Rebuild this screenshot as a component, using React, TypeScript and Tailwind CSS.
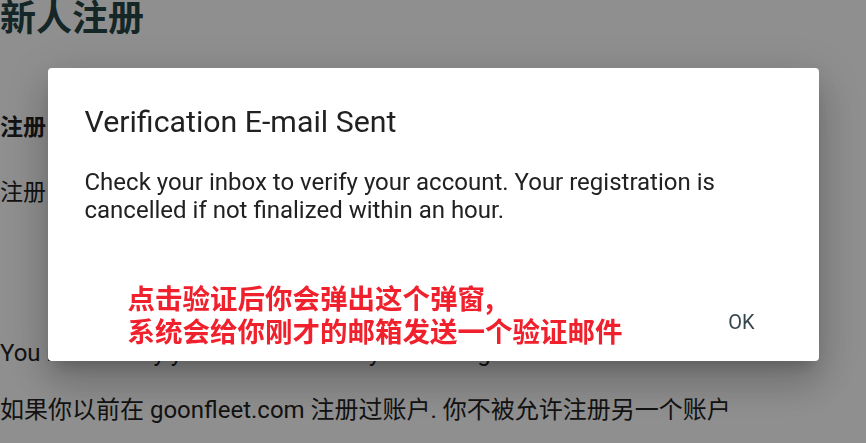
import React from 'react';

const cjk = "font-['Roboto','Noto_Sans_CJK_SC',sans-serif]";

export default function App() {
  return (
    <div className={`relative min-h-screen bg-white text-[#222] ${cjk}`}>
      <main>
        <h1 className="text-[36px] font-bold leading-[38px] text-[#264444]">新人注册</h1>
        <p className="mt-[72px] text-[23px] font-bold leading-[36px]">注册</p>
        <p className="mt-[29px] text-[23px] leading-[36px]">注册</p>
        <p className="mt-[124px] text-[24px] leading-[36px]">You must verify your e-mail before you can log in.</p>
        <p className="mt-[21px] text-[24px] leading-[36px]">如果你以前在 goonfleet.com 注册过账户. 你不被允许注册另一个账户</p>
      </main>

      <div className="fixed inset-0 bg-black/[0.44] flex justify-center items-start pt-[68px]">
        <div className="w-[771px] h-[293px] bg-white rounded-[4px] shadow-[0_11px_15px_-7px_rgba(0,0,0,0.2),0_24px_38px_3px_rgba(0,0,0,0.14),0_9px_46px_8px_rgba(0,0,0,0.12)] flex flex-col">
          <h2 className="px-[37px] pt-[36px] text-[30.3px] leading-[36px] font-normal text-[#212121]">
            Verification E-mail Sent
          </h2>
          <p className="px-[37px] mt-[28px] text-[24px] leading-[28px] text-[#212121]">
            Check your inbox to verify your account. Your registration is cancelled if not finalized within an hour.
          </p>
          <div className="mt-auto flex items-end justify-between pl-[80px] pr-[48px] pb-[14px]">
            <p className="text-[27.5px] leading-[33px] font-bold text-[#f0202c] font-['Noto_Sans_CJK_SC',sans-serif]">
              点击验证后你会弹出这个弹窗,
              <br />
              系统会给你刚才的邮箱发送一个验证邮件
            </p>
            <button className="mb-[7px] px-[16px] h-[36px] text-[20px] text-[#37474f] uppercase">OK</button>
          </div>
        </div>
      </div>
    </div>
  );
}
